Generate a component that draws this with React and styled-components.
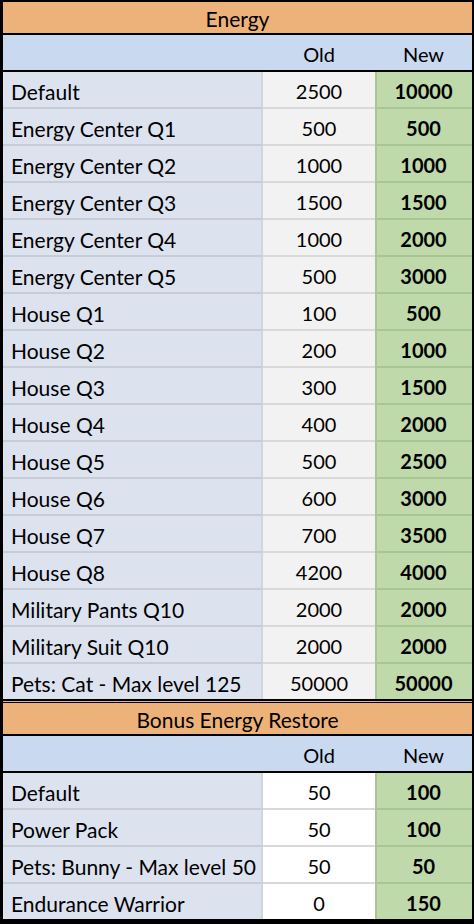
import React from 'react';
import styled, { createGlobalStyle } from 'styled-components';

const GlobalStyle = createGlobalStyle`
    html, body {
        margin: 0;
        padding: 0;
        background: #000;
    }
    body {
        font-family: Lato, "Liberation Sans", sans-serif;
        color: #000;
    }
`;

const Page = styled.div`
    width: 474px;
    height: 924px;
    background: #000;
    display: flex;
    flex-direction: column;
`;

const Table = styled.div`
    display: flex;
    flex-direction: column;
    gap: 2px;
    padding: ${(p) => p.$pad};
    background: #000;
`;

const Divider = styled.div`
    height: 1px;
    margin-left: 3px;
    margin-right: 2px;
    background: #edb27a;
`;

const Title = styled.div`
    height: 31px;
    background: #edb27a;
    display: flex;
    align-items: center;
    justify-content: center;
    font-size: 21px;
    padding-top: 1px;
    box-sizing: border-box;
`;

const HeadRow = styled.div`
    height: 35px;
    background: #c9d9ef;
    display: grid;
    grid-template-columns: 260px 112px 97px;
    font-size: 20px;
`;

const HeadCell = styled.div`
    display: flex;
    align-items: center;
    justify-content: center;
    padding-top: 3px;
`;

const Body = styled.div`
    display: flex;
    flex-direction: column;
`;

const Row = styled.div`
    display: grid;
    grid-template-columns: 260px 112px 97px;
    height: ${(p) => (p.$first ? '35px' : '37px')};
`;

const colours = {
    label: { bg: '#dce3ef', line: '#c7ccd5' },
    old: { bg: '#f2f2f2', line: '#d9d9d9' },
    white: { bg: '#ffffff', line: '#d9d9d9' },
    fresh: { bg: '#bfd9ab', line: '#a8c594' },
};

const Cell = styled.div`
    background: ${(p) => colours[p.$kind].bg};
    border-top: ${(p) => (p.$first ? 'none' : `2px solid ${colours[p.$kind].line}`)};
    display: flex;
    align-items: center;
    font-size: 20px;
    padding-top: 3px;
    box-sizing: border-box;
`;

const LabelCell = styled(Cell)`
    padding-left: 8px;
    font-size: 21px;
    border-right: 2px solid #d2d5da;
    white-space: nowrap;
`;

const OldCell = styled(Cell)`
    justify-content: center;
`;

const NewCell = styled(Cell)`
    justify-content: center;
    font-weight: 700;
    border-left: 2px solid #a8c594;
    padding-right: 2px;
`;

const energy = [
    ['Default', '2500', '10000'],
    ['Energy Center Q1', '500', '500'],
    ['Energy Center Q2', '1000', '1000'],
    ['Energy Center Q3', '1500', '1500'],
    ['Energy Center Q4', '1000', '2000'],
    ['Energy Center Q5', '500', '3000'],
    ['House Q1', '100', '500'],
    ['House Q2', '200', '1000'],
    ['House Q3', '300', '1500'],
    ['House Q4', '400', '2000'],
    ['House Q5', '500', '2500'],
    ['House Q6', '600', '3000'],
    ['House Q7', '700', '3500'],
    ['House Q8', '4200', '4000'],
    ['Military Pants Q10', '2000', '2000'],
    ['Military Suit Q10', '2000', '2000'],
    ['Pets: Cat - Max level 125', '50000', '50000'],
];

const restore = [
    ['Default', '50', '100'],
    ['Power Pack', '50', '100'],
    ['Pets: Bunny - Max level 50', '50', '50'],
    ['Endurance Warrior', '0', '150'],
];

function StatTable({ title, rows, oldKind, pad }) {
    return (
        <Table $pad={pad}>
            <Title>{title}</Title>
            <HeadRow>
                <div />
                <HeadCell>Old</HeadCell>
                <HeadCell>New</HeadCell>
            </HeadRow>
            <Body>
                {rows.map(([label, oldValue, newValue], i) => (
                    <Row key={label} $first={i === 0}>
                        <LabelCell $kind="label" $first={i === 0}>{label}</LabelCell>
                        <OldCell $kind={oldKind} $first={i === 0}>{oldValue}</OldCell>
                        <NewCell $kind="fresh" $first={i === 0}>{newValue}</NewCell>
                    </Row>
                ))}
            </Body>
        </Table>
    );
}

export default function App() {
    return (
        <Page>
            <GlobalStyle />
            <StatTable title="Energy" rows={energy} oldKind="old" pad="2px 2px 2px 3px" />
            <Divider />
            <StatTable title="Bonus Energy Restore" rows={restore} oldKind="white" pad="1px 2px 5px 3px" />
        </Page>
    );
}
